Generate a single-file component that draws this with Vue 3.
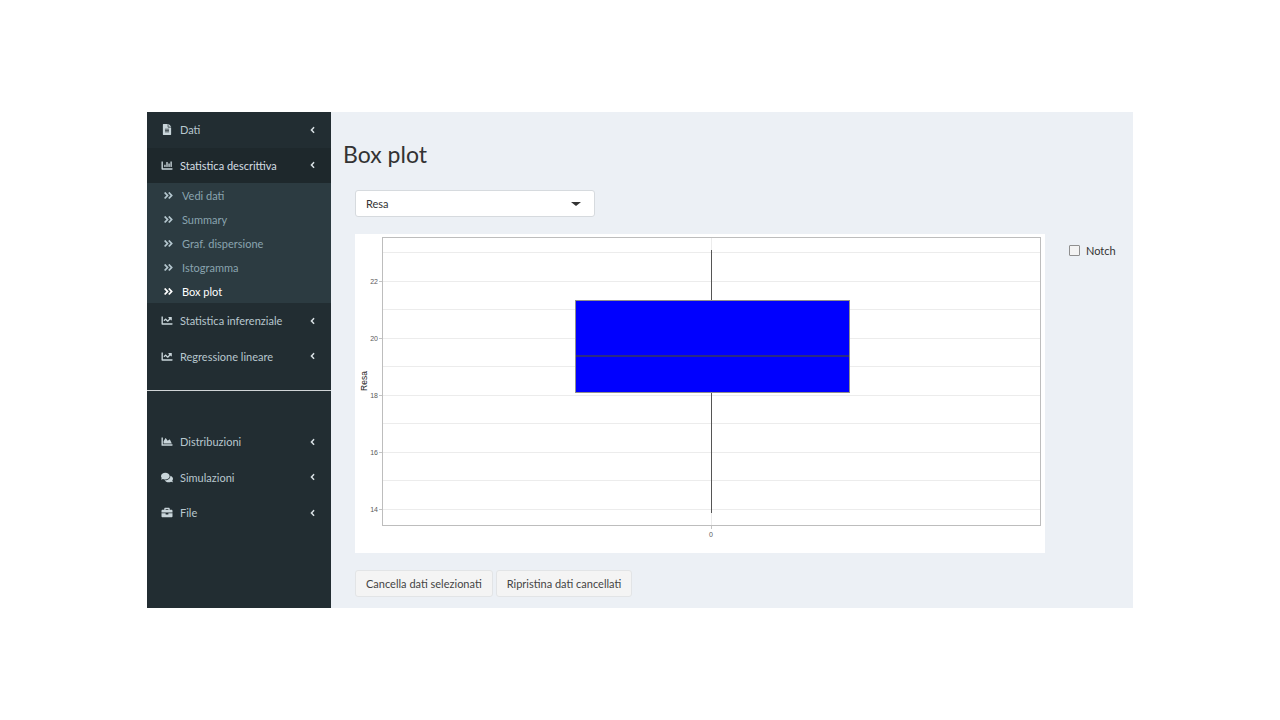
<template>
  <div class="frame">
    <aside class="sidebar">
      <ul class="menu">
        <li v-for="item in menuTop" :key="item.label">
          <a class="menu-item" :class="{ open: item.children }">
            <svg class="ico" :viewBox="icons[item.icon].box"><path :d="icons[item.icon].d" /></svg>
            <span class="menu-label">{{ item.label }}</span>
            <svg class="chev" viewBox="0 0 256 512"><path :d="angleLeft" /></svg>
          </a>
          <ul class="submenu" v-if="item.children">
            <li v-for="sub in item.children" :key="sub" class="sub-item" :class="{ active: sub === 'Box plot' }">
              <svg class="dbl" viewBox="0 0 448 512"><path :d="angleDouble" /></svg>
              <span>{{ sub }}</span>
            </li>
          </ul>
        </li>
      </ul>
      <hr class="divider" />
      <ul class="menu">
        <li v-for="item in menuBottom" :key="item.label">
          <a class="menu-item">
            <svg class="ico" :viewBox="icons[item.icon].box"><path :d="icons[item.icon].d" /></svg>
            <span class="menu-label">{{ item.label }}</span>
            <svg class="chev" viewBox="0 0 256 512"><path :d="angleLeft" /></svg>
          </a>
        </li>
      </ul>
    </aside>

    <main class="content">
      <h1 class="title">Box plot</h1>
      <div class="body">
        <div class="select">
          <span>Resa</span>
          <i class="caret"></i>
        </div>
        <div class="plot-row">
          <svg class="plot" width="690" height="319" viewBox="0 0 690 319">
            <rect x="27.5" y="3.5" width="658" height="288" fill="#fff" />
            <line x1="356.5" x2="356.5" y1="3" y2="292" class="grid" />
            <line v-for="y in minorTicks" :key="'m' + y" x1="28" x2="685" :y1="y" :y2="y" class="grid" />
            <line v-for="t in yTicks" :key="'g' + t.label" x1="28" x2="685" :y1="t.y" :y2="t.y" class="grid" />
            <line v-for="t in yTicks" :key="'t' + t.label" x1="24" x2="27" :y1="t.y" :y2="t.y" class="tick" />
            <text v-for="t in yTicks" :key="t.label" x="23" :y="t.y + 2.5" class="tick-label" text-anchor="end">{{ t.label }}</text>
            <line x1="356.5" x2="356.5" y1="16" y2="279" class="whisker" />
            <rect x="220.5" y="66.5" width="274" height="92" fill="#0000ff" stroke="#8f8f8f" stroke-width="1" />
            <line x1="221" x2="494" y1="122" y2="122" stroke="#3a3a5a" stroke-width="1.4" />
            <rect x="27.5" y="3.5" width="658" height="288" fill="none" stroke="#bdbdbd" stroke-width="1" />
            <line x1="356.5" x2="356.5" y1="292" y2="295" class="tick" />
            <text x="356" y="303" class="tick-label" text-anchor="middle">0</text>
            <text x="0" y="0" class="axis-title" text-anchor="middle" transform="translate(12 147) rotate(-90)">Resa</text>
          </svg>
          <label class="notch">
            <span class="check"></span>
            <span>Notch</span>
          </label>
        </div>
        <div class="actions">
          <button class="btn">Cancella dati selezionati</button>
          <button class="btn">Ripristina dati cancellati</button>
        </div>
      </div>
    </main>
  </div>
</template>

<script setup>
const angleLeft = 'M31.7 239l136-136c9.4-9.4 24.6-9.4 33.9 0l22.6 22.6c9.4 9.4 9.4 24.6 0 33.9L127.9 256l96.4 96.4c9.4 9.4 9.4 24.6 0 33.9L201.7 409c-9.4 9.4-24.6 9.4-33.9 0l-136-136c-9.5-9.4-9.5-24.6-.1-34z';
const angleDouble = 'M224.3 273l-136 136c-9.4 9.4-24.6 9.4-33.9 0l-22.6-22.6c-9.4-9.4-9.4-24.6 0-33.9l96.4-96.4-96.4-96.4c-9.4-9.4-9.4-24.6 0-33.9L54.3 103c9.4-9.4 24.6-9.4 33.9 0l136 136c9.5 9.4 9.5 24.6.1 34zm192-34l-136-136c-9.4-9.4-24.6-9.4-33.9 0l-22.6 22.6c-9.4 9.4-9.4 24.6 0 33.9l96.4 96.4-96.4 96.4c-9.4 9.4-9.4 24.6 0 33.9l22.6 22.6c9.4 9.4 24.6 9.4 33.9 0l136-136c9.4-9.2 9.4-24.4 0-33.8z';

const icons = {
  file: { box: '0 0 384 512', d: 'M224 136V0H24C10.7 0 0 10.7 0 24v464c0 13.3 10.7 24 24 24h336c13.3 0 24-10.7 24-24V160H248c-13.2 0-24-10.8-24-24zm64 236c0 6.6-5.4 12-12 12H108c-6.6 0-12-5.4-12-12v-8c0-6.6 5.4-12 12-12h168c6.6 0 12 5.4 12 12v8zm0-64c0 6.6-5.4 12-12 12H108c-6.6 0-12-5.4-12-12v-8c0-6.6 5.4-12 12-12h168c6.6 0 12 5.4 12 12v8zm0-72v8c0 6.6-5.4 12-12 12H108c-6.6 0-12-5.4-12-12v-8c0-6.6 5.4-12 12-12h168c6.6 0 12 5.4 12 12zm96-114.1v6.1H256V0h6.1c6.4 0 12.5 2.5 17 7l97.9 98c4.5 4.5 7 10.6 7 16.9z' },
  bar: { box: '0 0 512 512', d: 'M332.8 320h38.4c6.4 0 12.8-6.4 12.8-12.8V172.8c0-6.4-6.4-12.8-12.8-12.8h-38.4c-6.4 0-12.8 6.4-12.8 12.8v134.4c0 6.4 6.4 12.8 12.8 12.8zm96 0h38.4c6.4 0 12.8-6.4 12.8-12.8V76.8c0-6.4-6.4-12.8-12.8-12.8h-38.4c-6.4 0-12.8 6.4-12.8 12.8v230.4c0 6.4 6.4 12.8 12.8 12.8zm-288 0h38.4c6.4 0 12.8-6.4 12.8-12.8v-70.4c0-6.4-6.4-12.8-12.8-12.8h-38.4c-6.4 0-12.8 6.4-12.8 12.8v70.4c0 6.4 6.4 12.8 12.8 12.8zm96 0h38.4c6.4 0 12.8-6.4 12.8-12.8V108.8c0-6.4-6.4-12.8-12.8-12.8h-38.4c-6.4 0-12.8 6.4-12.8 12.8v198.4c0 6.4 6.4 12.8 12.8 12.8zM496 384H64V80c0-8.84-7.16-16-16-16H16C7.16 64 0 71.16 0 80v336c0 17.67 14.33 32 32 32h464c8.84 0 16-7.16 16-16v-32c0-8.84-7.16-16-16-16z' },
  line: { box: '0 0 512 512', d: 'M496 384H64V80c0-8.84-7.16-16-16-16H16C7.16 64 0 71.16 0 80v336c0 17.67 14.33 32 32 32h464c8.84 0 16-7.16 16-16v-32c0-8.84-7.16-16-16-16zM464 96H345.94c-21.38 0-32.09 25.85-16.97 40.97l32.4 32.4L288 242.75l-73.37-73.37c-12.5-12.5-32.76-12.5-45.25 0l-68.69 68.69c-6.25 6.25-6.25 16.38 0 22.63l22.62 22.62c6.25 6.25 16.38 6.25 22.63 0L192 237.25l73.37 73.37c12.5 12.5 32.76 12.5 45.25 0l96-96 32.4 32.4c15.12 15.12 40.97 4.41 40.97-16.97V112c.01-8.84-7.15-16-15.99-16z' },
  area: { box: '0 0 512 512', d: 'M500 384c6.6 0 12 5.4 12 12v40c0 6.6-5.4 12-12 12H12c-6.6 0-12-5.4-12-12V76c0-6.6 5.4-12 12-12h40c6.6 0 12 5.4 12 12v308h436zM372.7 159.5L288 216l-85.3-113.7c-5.1-6.8-15.5-6.3-19.9 1L96 248v104h384l-89.9-187.8c-3.2-6.5-11.4-8.7-17.4-4.7z' },
  comments: { box: '0 0 576 512', d: 'M416 192c0-88.4-93.1-160-208-160S0 103.6 0 192c0 34.3 14.1 65.9 38 92-13.4 30.2-35.5 54.2-35.8 54.5-2.2 2.3-2.8 5.7-1.5 8.7S4.8 352 8 352c36.6 0 66.9-12.3 88.7-25 32.2 15.7 70.3 25 111.3 25 114.9 0 208-71.6 208-160zm122 220c23.9-26 38-57.7 38-92 0-66.9-53.5-124.2-129.3-148.1.9 6.6 1.3 13.3 1.3 20.1 0 105.9-107.7 192-240 192-10.8 0-21.3-.8-31.7-1.9C207.8 439.6 281.8 480 368 480c41 0 79.1-9.2 111.3-25 21.8 12.7 52.1 25 88.7 25 3.2 0 6.1-1.9 7.3-4.8 1.3-2.9.7-6.3-1.5-8.7-.3-.3-22.4-24.2-35.8-54.5z' },
  briefcase: { box: '0 0 512 512', d: 'M320 336c0 8.84-7.16 16-16 16h-96c-8.84 0-16-7.16-16-16v-48H0v144c0 25.6 22.4 48 48 48h416c25.6 0 48-22.4 48-48V288H320v48zm144-208h-80V80c0-25.6-22.4-48-48-48H176c-25.6 0-48 22.4-48 48v48H48c-25.6 0-48 22.4-48 48v80h512v-80c0-25.6-22.4-48-48-48zm-144 0H192V96h128v32z' }
};

const menuTop = [
  { label: 'Dati', icon: 'file' },
  {
    label: 'Statistica descrittiva',
    icon: 'bar',
    children: ['Vedi dati', 'Summary', 'Graf. dispersione', 'Istogramma', 'Box plot']
  },
  { label: 'Statistica inferenziale', icon: 'line' },
  { label: 'Regressione lineare', icon: 'line' }
];

const menuBottom = [
  { label: 'Distribuzioni', icon: 'area' },
  { label: 'Simulazioni', icon: 'comments' },
  { label: 'File', icon: 'briefcase' }
];

// plot coordinates are relative to the white chart area
const yTicks = [
  { label: '22', y: 47.5 },
  { label: '20', y: 104.5 },
  { label: '18', y: 161.5 },
  { label: '16', y: 218.5 },
  { label: '14', y: 275.5 }
];
const minorTicks = [18.5, 75.5, 132.5, 189.5, 246.5];
</script>

<style>
body {
  margin: 0;
  background: #fff;
}
</style>

<style scoped>
.frame {
  display: flex;
  width: 986px;
  height: 496px;
  margin: 112px 0 0 147px;
  font-family: Lato, "Liberation Sans", sans-serif;
  font-size: 11px;
  color: #333;
}

.sidebar {
  width: 184px;
  flex-shrink: 0;
  background: #222d32;
}

.menu {
  list-style: none;
  margin: 0;
  padding: 0;
}

.menu-item {
  display: flex;
  align-items: center;
  height: 35.5px;
  padding: 0 15px 0 14px;
  box-sizing: border-box;
  color: #b8c7ce;
}

.menu-item.open {
  background: #1e282c;
  color: #d5dee3;
}

.ico {
  width: 12px;
  height: 11px;
  margin-right: 7px;
  fill: #c9d5da;
  flex-shrink: 0;
}

.menu-label {
  flex: 1;
}

.chev {
  width: 7px;
  height: 10px;
  fill: #d8e0e4;
}

.submenu {
  list-style: none;
  margin: 0;
  padding: 0;
  background: #2c3b41;
}

.sub-item {
  display: flex;
  align-items: center;
  height: 24px;
  padding-left: 16px;
  color: #8aa4af;
}

.sub-item.active {
  color: #fff;
}

.dbl {
  width: 11px;
  height: 11px;
  margin-right: 8px;
  fill: #b4c6ce;
}

.sub-item.active .dbl {
  fill: #fff;
}

.divider {
  margin: 16px 0 33px;
  border: 0;
  border-top: 1px solid #d0d4d6;
  height: 0;
}

.content {
  flex: 1;
  min-width: 0;
  background: #ecf0f5;
}

.title {
  margin: 0;
  padding: 28px 0 0 12px;
  font-size: 23px;
  line-height: 28px;
  font-weight: 400;
  color: #333;
}

.body {
  padding: 22px 0 0 24px;
}

.select {
  display: flex;
  align-items: center;
  justify-content: space-between;
  width: 240px;
  height: 27px;
  box-sizing: border-box;
  padding: 0 13px 0 10px;
  background: #fff;
  border: 1px solid #d6dade;
  border-radius: 3px;
}

.caret {
  width: 0;
  height: 0;
  border-left: 5px solid transparent;
  border-right: 5px solid transparent;
  border-top: 4px solid #333;
}

.plot-row {
  display: flex;
  align-items: flex-start;
  margin-top: 17px;
}

.plot {
  display: block;
  background: #fff;
}

.grid {
  stroke: #ececec;
  stroke-width: 1;
}

.tick {
  stroke: #c4c4c4;
  stroke-width: 1;
}

.whisker {
  stroke: #555;
  stroke-width: 1;
}

.tick-label {
  font-family: "Liberation Sans", Arial, sans-serif;
  font-size: 7px;
  fill: #5a5a5a;
}

.axis-title {
  font-family: "Liberation Sans", Arial, sans-serif;
  font-size: 8.5px;
  fill: #222;
}

.notch {
  display: flex;
  align-items: center;
  gap: 6px;
  margin: 10px 0 0 24px;
}

.check {
  width: 9px;
  height: 9px;
  background: #f3f3f3;
  border: 1px solid #8f8f8f;
  border-radius: 1px;
}

.actions {
  display: flex;
  gap: 3px;
  margin-top: 17px;
}

.btn {
  height: 27px;
  padding: 0 10px;
  font: inherit;
  color: #444;
  background: #f4f4f4;
  border: 1px solid #e2e4e6;
  border-radius: 3px;
}
</style>
